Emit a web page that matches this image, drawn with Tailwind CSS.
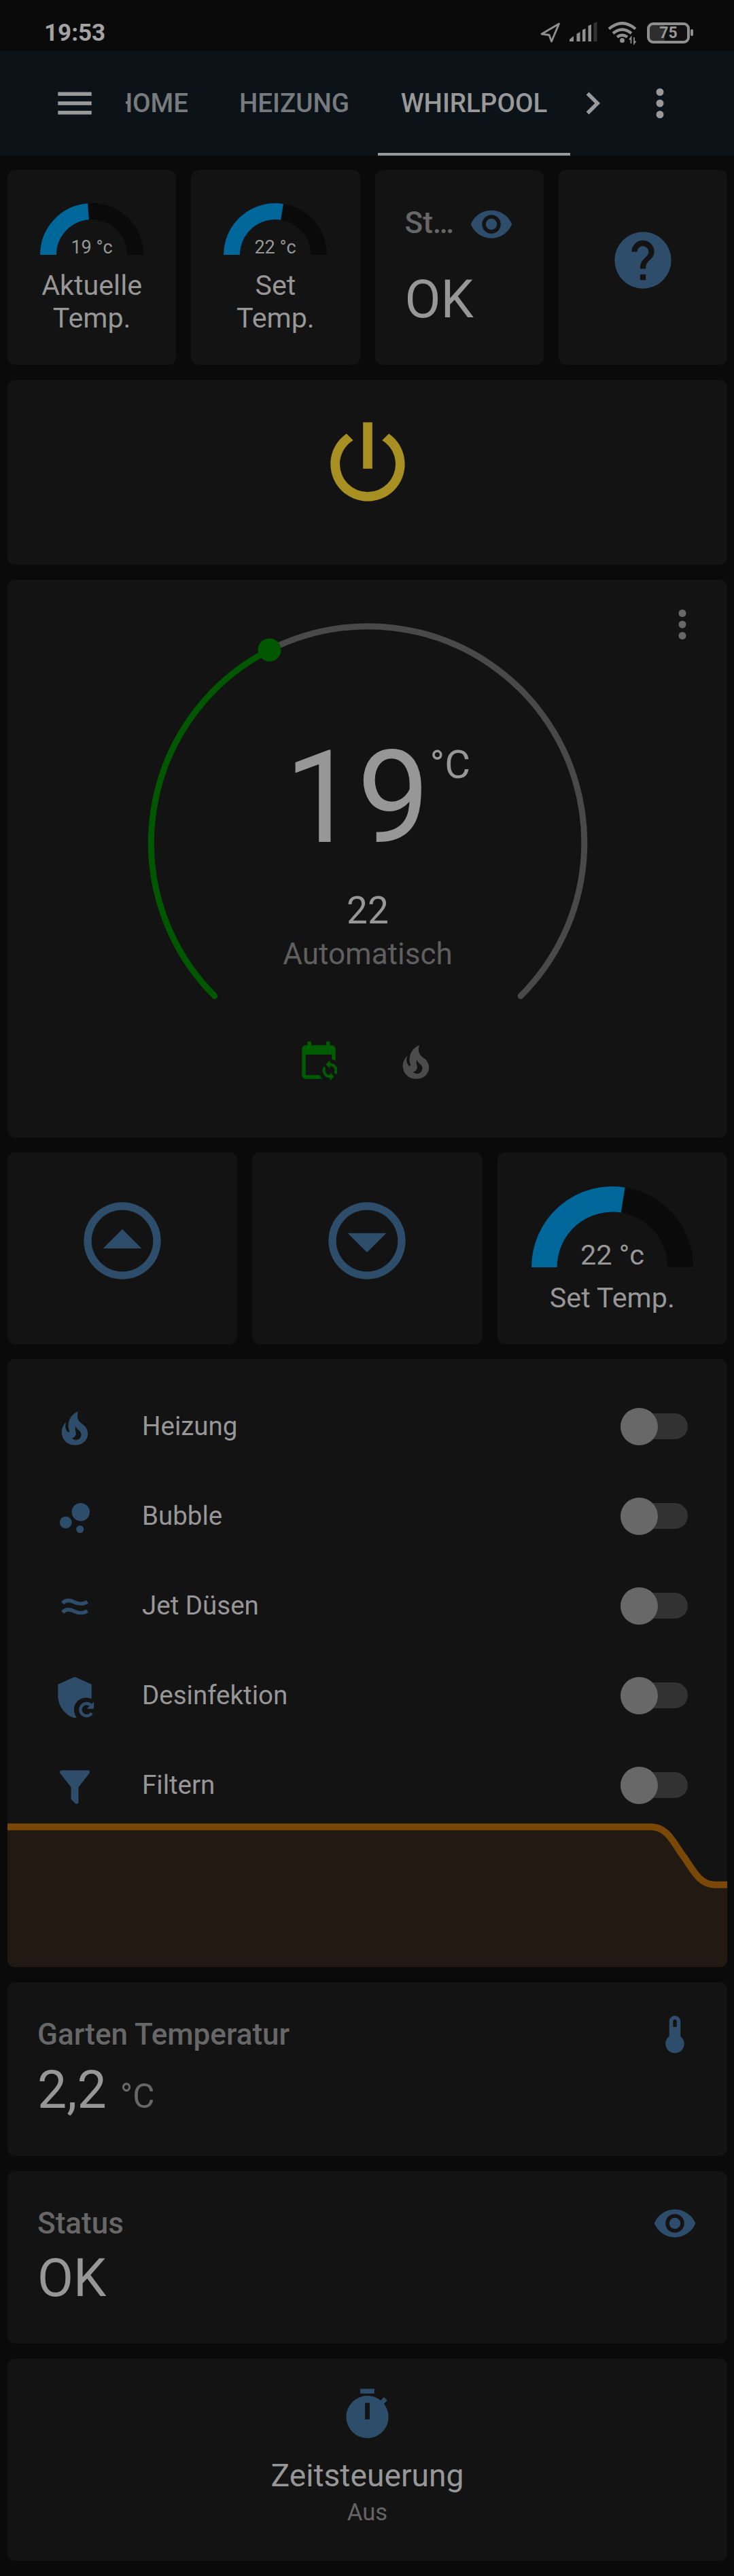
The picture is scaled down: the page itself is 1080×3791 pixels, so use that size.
<!DOCTYPE html>
<html lang="de">
<head>
<meta charset="utf-8">
<title>Whirlpool</title>
<script src="https://cdn.jsdelivr.net/npm/@tailwindcss/browser@4"></script>
</head>
<body class="bg-[#0a0a0a] font-[Roboto,sans-serif] text-[#979797]">
<svg class="hidden">
  <symbol id="fire" viewBox="0 0 24 24"><path fill="currentColor" d="M17.66 11.2C17.43 10.9 17.15 10.64 16.89 10.38C16.22 9.78 15.46 9.35 14.82 8.72C13.33 7.26 13 4.85 13.95 3C13 3.23 12.17 3.75 11.46 4.32C8.87 6.4 7.85 10.07 9.07 13.22C9.11 13.32 9.15 13.42 9.15 13.55C9.15 13.77 9 13.97 8.8 14.05C8.57 14.15 8.33 14.09 8.14 13.93C8.08 13.88 8.04 13.83 8 13.76C6.87 12.33 6.69 10.28 7.45 8.64C5.78 10 4.87 12.3 5 14.47C5.06 14.97 5.12 15.47 5.29 15.97C5.43 16.57 5.7 17.17 6 17.7C7.08 19.43 8.95 20.67 10.96 20.92C13.1 21.19 15.39 20.8 17.03 19.32C18.86 17.66 19.5 15 18.56 12.72L18.43 12.46C18.22 12 17.66 11.2 17.66 11.2M14.5 17.5C14.22 17.74 13.76 18 13.4 18.1C12.28 18.5 11.16 17.94 10.5 17.28C11.69 17 12.4 16.12 12.61 15.23C12.78 14.43 12.46 13.77 12.33 13C12.21 12.26 12.23 11.63 12.5 10.94C12.69 11.32 12.89 11.7 13.13 12C13.9 13 15.11 13.44 15.37 14.8C15.41 14.94 15.43 15.08 15.43 15.23C15.46 16.05 15.1 16.95 14.5 17.5Z"/></symbol>
  <symbol id="eye" viewBox="0 0 24 24"><path fill="currentColor" d="M12,9A3,3 0 0,0 9,12A3,3 0 0,0 12,15A3,3 0 0,0 15,12A3,3 0 0,0 12,9M12,17A5,5 0 0,1 7,12A5,5 0 0,1 12,7A5,5 0 0,1 17,12A5,5 0 0,1 12,17M12,4.5C7,4.5 2.73,7.61 1,12C2.73,16.39 7,19.5 12,19.5C17,19.5 21.27,16.39 23,12C21.27,7.61 17,4.5 12,4.5Z"/></symbol>
  <symbol id="dots" viewBox="0 0 24 24"><path fill="currentColor" d="M12,16A2,2 0 0,1 14,18A2,2 0 0,1 12,20A2,2 0 0,1 10,18A2,2 0 0,1 12,16M12,10A2,2 0 0,1 14,12A2,2 0 0,1 12,14A2,2 0 0,1 10,12A2,2 0 0,1 12,10M12,4A2,2 0 0,1 14,6A2,2 0 0,1 12,8A2,2 0 0,1 10,6A2,2 0 0,1 12,4Z"/></symbol>
</svg>

<!-- status bar -->
<div class="flex h-[75px] items-center justify-between pt-[21px] pl-[65px] pr-[60px]">
  <div class="text-[35px] leading-none font-bold text-[#a3a3a3]">19:53</div>
  <div class="flex items-center">
    <svg class="h-[38px] w-[148px]" viewBox="792 29 148 38" fill="none">
      <path d="M822.5 35L797 50L808 51.5L811.5 61Z" stroke="#8f8f8f" stroke-width="2.8" stroke-linejoin="round"/>
      <path d="M838 61V58L844 53V61ZM848.5 61V50L853.5 47V61ZM857 61V44L861.500 42V61ZM865.500 61V38L870 36V61Z" fill="#8f8f8f"/>
      <path d="M873.500 61V34L878.500 32V61Z" fill="#333"/>
      <path d="M896 42.500Q915.500 26 935 42.500M902 49Q915.500 38 929 49M908 54.500Q915.500 49 923 54.500" stroke="#8f8f8f" stroke-width="4.200"/>
      <circle cx="915.500" cy="59.500" r="3.500" fill="#8f8f8f"/>
      <path d="M928.500 64V55L926 58.500M933 55V64L935.500 60.500" stroke="#8f8f8f" stroke-width="1.800"/>
    </svg>
    <div class="ml-3 flex h-[31px] w-[63px] items-center justify-center rounded-[9px] border-[4px] border-[#8f8f8f] bg-[linear-gradient(90deg,#2e2e2e_40%,#101010_40%)] text-[23px] leading-none font-bold">75</div>
    <div class="ml-px h-2.5 w-1 rounded-sm bg-[#8f8f8f]"></div>
  </div>
</div>

<!-- app bar -->
<div class="flex h-[154px] items-center bg-[#0b1318] pl-[77px] text-[38.500px] leading-none font-medium text-[#999]">
  <svg class="size-[66px] shrink-0" viewBox="0 0 24 24"><path fill="currentColor" d="M3,6H21V8H3V6M3,11H21V13H3V11M3,16H21V18H3V16Z"/></svg>
  <div class="ml-[42px] flex h-full w-[92px] shrink-0 items-center justify-end overflow-hidden text-[#777b7e]"><span>HOME</span></div>
  <div class="ml-[43px] flex h-full w-[226px] items-center justify-center text-[#777b7e]">HEIZUNG</div>
  <div class="ml-[10px] flex h-full w-[283px] items-center justify-center border-b-4 border-[#999] pt-1 whitespace-nowrap">WHIRLPOOL</div>
  <svg class="size-[66px]" viewBox="0 0 24 24"><path fill="currentColor" d="M8.59,16.580L13.170,12L8.590,7.410L10,6L16,12L10,18L8.590,16.580Z"/></svg>
  <svg class="ml-[33px] size-[66px]"><use href="#dots"/></svg>
</div>

<main class="flex flex-col gap-[22px] pt-[21px] pr-[10px] pl-[11px]">
  <div class="grid h-[287px] grid-cols-4 gap-[22px]">
    <div class="flex flex-col items-center rounded-[11px] bg-[#131313] pt-[49px]">
      <svg class="h-[76px] w-[152px] overflow-visible" viewBox="-76 -76 152 76">
        <path d="M-64 0A64 64 0 0 1 64 0" fill="none" stroke="#0a0a0a" stroke-width="24"/>
        <path d="M-64 0A64 64 0 0 1 -5.020 -63.800" fill="none" stroke="#00679b" stroke-width="24"/>
        <text x="0" y="-2" text-anchor="middle" font-size="27" fill="#979797">19 °c</text>
      </svg>
      <div class="mt-[21px] text-center text-[41.250px] leading-[48px]">Aktuelle<br>Temp.</div>
    </div>
    <div class="flex flex-col items-center rounded-[11px] bg-[#131313] pt-[49px]">
      <svg class="h-[76px] w-[152px] overflow-visible" viewBox="-76 -76 152 76">
        <path d="M-64 0A64 64 0 0 1 64 0" fill="none" stroke="#0a0a0a" stroke-width="24"/>
        <path d="M-64 0A64 64 0 0 1 10.010 -63.210" fill="none" stroke="#00679b" stroke-width="24"/>
        <text x="0" y="-2" text-anchor="middle" font-size="27" fill="#979797">22 °c</text>
      </svg>
      <div class="mt-[21px] text-center text-[41.250px] leading-[48px]">Set<br>Temp.</div>
    </div>
    <div class="rounded-[11px] bg-[#131313] px-[44px] pt-[47px]">
      <div class="flex h-[66px] items-center justify-between">
        <div class="pb-[5px] text-[44px] leading-none font-medium text-[#676767]">St…</div>
        <svg class="size-[66px] text-[#2e4d6b]"><use href="#eye"/></svg>
      </div>
      <div class="mt-[38px] text-[77px] leading-[80px]">OK</div>
    </div>
    <div class="flex items-center justify-center rounded-[11px] bg-[#131313] pb-[21px]">
      <svg class="size-[100px] text-[#2e4d6b]" viewBox="0 0 24 24"><path fill="currentColor" d="M15.070,11.250L14.170,12.170C13.450,12.890 13,13.500 13,15H11V14.500C11,13.390 11.450,12.390 12.170,11.670L13.410,10.410C13.780,10.050 14,9.550 14,9C14,7.890 13.100,7 12,7A2,2 0 0,0 10,9H8A4,4 0 0,1 12,5A4,4 0 0,1 16,9C16,9.880 15.640,10.670 15.070,11.250M13,19H11V17H13M12,2A10,10 0 0,0 2,12A10,10 0 0,0 12,22A10,10 0 0,0 22,12C22,6.470 17.500,2 12,2Z"/></svg>
    </div>
  </div>

  <div class="flex h-[272px] justify-center rounded-[11px] bg-[#131313] pt-[42px]">
    <svg class="size-[164px] text-[#a78f22]" viewBox="0 0 24 24"><path fill="currentColor" d="M16.560,5.440L15.110,6.890C16.840,7.940 18,9.830 18,12A6,6 0 0,1 12,18A6,6 0 0,1 6,12C6,9.830 7.160,7.940 8.880,6.880L7.440,5.440C5.360,6.880 4,9.280 4,12A8,8 0 0,0 12,20A8,8 0 0,0 20,12C20,9.280 18.640,6.880 16.560,5.440M13,3H11V13H13"/></svg>
  </div>

  <!-- thermostat -->
  <div class="relative flex h-[821px] flex-col items-center rounded-[11px] bg-[#131313] pt-[60px]">
    <svg class="absolute top-[33px] right-[33px] size-[66px] text-[#686868]"><use href="#dots"/></svg>
    <svg class="h-[570px] w-[660px] overflow-visible" viewBox="-330 -327.500 660 570" fill="none" stroke-width="9" stroke-linecap="round">
      <path d="M-144.500 -284A318.500 318.500 0 0 1 225.200 225.200" stroke="#494949"/>
      <path d="M-225.200 225.200A318.500 318.500 0 0 1 -144.500 -284" stroke="#005700"/>
      <circle cx="-144.500" cy="-284" r="17" fill="#005700"/>
      <g stroke="none" fill="#979797">
        <text x="-15.500" y="-2" text-anchor="middle" font-size="190">19</text>
        <text x="91.500" y="-96" font-size="58">°C</text>
        <text x="0" y="118.500" text-anchor="middle" font-size="55">22</text>
        <text x="0" y="178" text-anchor="middle" font-size="44" fill="#5f5f5f">Automatisch</text>
      </g>
    </svg>
    <div class="mt-[47px] flex gap-[77px]">
      <svg class="size-[66px] text-[#005c00]" viewBox="0 0 24 24"><path fill="currentColor" d="M18,11V12.500C21.190,12.500 23.090,16.050 21.330,18.710L20.240,17.620C21.060,15.960 19.850,14 18,14V15.500L15.750,13.250L18,11M18,22V20.500C14.810,20.500 12.910,16.950 14.670,14.290L15.760,15.380C14.940,17.040 16.150,19 18,19V17.500L20.250,19.750L18,22M19,3H18V1H16V3H8V1H6V3H5A2,2 0 0,0 3,5V19A2,2 0 0,0 5,21H14C13.360,20.450 12.860,19.770 12.500,19H5V8H19V10.590C19.710,10.700 20.390,10.940 21,11.310V5A2,2 0 0,0 19,3Z"/></svg>
      <svg class="size-[66px] text-[#4b4b4b]"><use href="#fire"/></svg>
    </div>
  </div>

  <div class="grid h-[282px] grid-cols-3 gap-[22px] text-[#2e4d6b]">
    <div class="flex items-center justify-center rounded-[11px] bg-[#131313] pb-[22px]">
      <svg class="size-[136px]" viewBox="0 0 24 24"><path fill="currentColor" d="M12,20A8,8 0 0,1 4,12A8,8 0 0,1 12,4A8,8 0 0,1 20,12A8,8 0 0,1 12,20M12,22A10,10 0 0,0 22,12A10,10 0 0,0 12,2A10,10 0 0,0 2,12A10,10 0 0,0 12,22M17,14L12,9L7,14H17Z"/></svg>
    </div>
    <div class="flex items-center justify-center rounded-[11px] bg-[#131313] pb-[22px]">
      <svg class="size-[136px]" viewBox="0 0 24 24"><path fill="currentColor" d="M12,20A8,8 0 0,1 4,12A8,8 0 0,1 12,4A8,8 0 0,1 20,12A8,8 0 0,1 12,20M12,22A10,10 0 0,0 22,12A10,10 0 0,0 12,2A10,10 0 0,0 2,12A10,10 0 0,0 12,22M7,10L12,15L17,10H7Z"/></svg>
    </div>
    <div class="flex flex-col items-center rounded-[11px] bg-[#131313] pt-[50px] text-[#979797]">
      <svg class="h-[119px] w-[238px] overflow-visible" viewBox="-119 -119 238 119">
        <path d="M-100.200 0A100.200 100.200 0 0 1 100.200 0" fill="none" stroke="#0a0a0a" stroke-width="37.600"/>
        <path d="M-100.200 0A100.200 100.200 0 0 1 15.670 -98.970" fill="none" stroke="#00679b" stroke-width="37.600"/>
        <text x="0" y="-4" text-anchor="middle" font-size="41.500" fill="#979797">22 °c</text>
      </svg>
      <div class="mt-[21px] text-[41.250px] leading-[48px]">Set Temp.</div>
    </div>
  </div>

  <!-- switches -->
  <div class="flex h-[895px] flex-col overflow-hidden rounded-[11px] bg-[#131313] pt-[33px] text-[38.500px] leading-none">
    <div class="flex h-[132px] shrink-0 items-center pr-[58px] pl-[66px]">
      <svg class="mt-[5px] size-[66px] text-[#2e4d6b]"><use href="#fire"/></svg>
      <div class="ml-[66px] flex-1">Heizung</div>
      <div class="flex h-[38px] w-[99px] items-center rounded-full bg-[#323232]"><div class="size-[55px] shrink-0 rounded-full bg-[#686868]"></div></div>
    </div>
    <div class="flex h-[132px] shrink-0 items-center pr-[58px] pl-[66px]">
      <svg class="mt-[5px] size-[66px] text-[#2e4d6b]" viewBox="0 0 24 24"><path fill="currentColor" d="M7.200,11.200C8.970,11.200 10.400,12.630 10.400,14.400C10.400,16.170 8.970,17.600 7.200,17.600C5.430,17.600 4,16.170 4,14.400C4,12.630 5.430,11.200 7.200,11.200M14.800,16A2,2 0 0,1 16.800,18A2,2 0 0,1 14.800,20A2,2 0 0,1 12.800,18A2,2 0 0,1 14.800,16M15.200,4A4.800,4.800 0 0,1 20,8.800C20,11.450 17.850,13.600 15.200,13.600A4.800,4.800 0 0,1 10.400,8.800C10.400,6.150 12.550,4 15.200,4Z"/></svg>
      <div class="ml-[66px] flex-1">Bubble</div>
      <div class="flex h-[38px] w-[99px] items-center rounded-full bg-[#323232]"><div class="size-[55px] shrink-0 rounded-full bg-[#686868]"></div></div>
    </div>
    <div class="flex h-[132px] shrink-0 items-center pr-[58px] pl-[66px]">
      <svg class="mt-[5px] size-[66px] text-[#2e4d6b]" viewBox="0 0 24 24"><path fill="none" stroke="currentColor" stroke-width="2" d="M5.500 9.600C7 7.900 9 7.700 11.500 8.900C14.500 10.300 16.500 10.300 18.700 8.800M5.500 14.500C7 12.800 9 12.600 11.500 13.800C14.500 15.200 16.500 15.200 18.700 13.700"/></svg>
      <div class="ml-[66px] flex-1">Jet Düsen</div>
      <div class="flex h-[38px] w-[99px] items-center rounded-full bg-[#323232]"><div class="size-[55px] shrink-0 rounded-full bg-[#686868]"></div></div>
    </div>
    <div class="flex h-[132px] shrink-0 items-center pr-[58px] pl-[66px]">
      <svg class="mt-[5px] size-[66px] text-[#2e4d6b]" viewBox="0 0 24 24"><path fill="currentColor" d="M12 1L3 5V11C3 16.500 6.800 21.700 12 23L13 22.700C12.100 21.500 11.600 20 11.600 18.500C11.600 15 14.500 12.200 18 12.200C19 12.200 20 12.400 20.900 12.800L21 11V5Z"/><path fill="none" stroke="currentColor" stroke-width="1.600" d="M20.900 16.500A3.300 3.300 0 1 0 21.100 20.400"/><path fill="currentColor" d="M22.200 14.300V18.100H18.400Z"/></svg>
      <div class="ml-[66px] flex-1">Desinfektion</div>
      <div class="flex h-[38px] w-[99px] items-center rounded-full bg-[#323232]"><div class="size-[55px] shrink-0 rounded-full bg-[#686868]"></div></div>
    </div>
    <div class="flex h-[132px] shrink-0 items-center pr-[58px] pl-[66px]">
      <svg class="mt-[5px] size-[66px] text-[#2e4d6b]" viewBox="0 0 24 24"><path fill="currentColor" d="M14,12V19.880C14.040,20.180 13.940,20.500 13.710,20.710C13.320,21.100 12.690,21.100 12.300,20.710L10.290,18.700C10.060,18.470 9.960,18.160 10,17.870V12H9.970L4.210,4.620C3.870,4.190 3.950,3.560 4.380,3.220C4.570,3.080 4.780,3 5,3H19C19.220,3 19.430,3.080 19.620,3.220C20.050,3.560 20.130,4.190 19.790,4.620L14.030,12H14Z"/></svg>
      <div class="ml-[66px] flex-1">Filtern</div>
      <div class="flex h-[38px] w-[99px] items-center rounded-full bg-[#323232]"><div class="size-[55px] shrink-0 rounded-full bg-[#686868]"></div></div>
    </div>
    <!-- temperature history -->
    <svg class="-mt-[10px] h-[212px] w-[1059px] shrink-0" viewBox="11 2683 1059 212">
      <path fill="#221a12" d="M11 2688.600H958C982 2688.600 991 2712 1005 2731C1019 2750 1028 2773.700 1052 2773.700H1070V2900H11Z"/>
      <path fill="none" stroke="#794807" stroke-width="10" d="M0 2688.600H958C982 2688.600 991 2712 1005 2731C1019 2750 1028 2773.700 1052 2773.700H1080"/>
    </svg>
  </div>

  <div class="h-[256px] rounded-[11px] bg-[#131313] px-[44px] pt-[44px]">
    <div class="flex h-[66px] items-center justify-between">
      <div class="text-[44px] leading-none font-medium text-[#676767]">Garten Temperatur</div>
      <svg class="size-[66px] text-[#2e4d6b]" viewBox="0 0 24 24"><path fill="currentColor" fill-rule="evenodd" d="M15 13V5A3 3 0 0 0 9 5V13A5 5 0 1 0 15 13M12 4A1 1 0 0 1 13 5V8H11V5A1 1 0 0 1 12 4Z"/></svg>
    </div>
    <div class="mt-[9px] flex items-baseline leading-[80px]"><span class="text-[77px]">2,2</span><span class="ml-[20px] text-[49.500px] text-[#676767]">°C</span></div>
  </div>

  <div class="h-[254px] rounded-[11px] bg-[#131313] px-[44px] pt-[44px]">
    <div class="flex h-[66px] items-center justify-between">
      <div class="text-[44px] leading-none font-medium text-[#676767]">Status</div>
      <svg class="size-[66px] text-[#2e4d6b]"><use href="#eye"/></svg>
    </div>
    <div class="mt-[8px] text-[77px] leading-[80px]">OK</div>
  </div>

  <div class="flex h-[298px] flex-col items-center rounded-[11px] bg-[#131313] pt-[41px]">
    <svg class="size-[83px] text-[#2e4d6b]" viewBox="0 0 24 24"><path fill="currentColor" d="M19.030,7.390L20.450,5.970C20,5.460 19.550,5 19.040,4.560L17.620,6C16.070,4.740 14.120,4 12,4A9,9 0 0,0 3,13A9,9 0 0,0 12,22C17,22 21,17.970 21,13C21,10.880 20.260,8.930 19.030,7.390M13,14H11V7H13V14M15,1H9V3H15V1Z"/></svg>
    <div class="mt-[21px] text-[46.200px] leading-[54px]">Zeitsteuerung</div>
    <div class="mt-[7px] text-[34.650px] leading-[40px] text-[#646464]">Aus</div>
  </div>
</main>
</body>
</html>
